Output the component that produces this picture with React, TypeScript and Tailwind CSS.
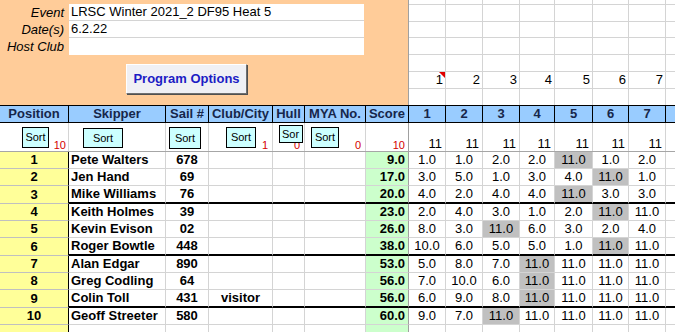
import React from "react";

const W = [
  "w-[69px]",
  "w-[97px]",
  "w-[43px]",
  "w-[64px]",
  "w-[32px]",
  "w-[61px]",
  "w-[43px]",
  "w-[37px]",
  "w-[37px]",
  "w-[37px]",
  "w-[35px]",
  "w-[38px]",
  "w-[36px]",
  "w-[37px]",
  "w-[40px]",
];
const RW = W.slice(7);

type Row = {
  name: string;
  sail: string;
  club: string;
  score: number;
  r: number[];
  d: number;
};

const rows: Row[] = [
  { name: "Pete Walters", sail: "678", club: "", score: 9, r: [1, 1, 2, 2, 11, 1, 2], d: 4 },
  { name: "Jen Hand", sail: "69", club: "", score: 17, r: [3, 5, 1, 3, 4, 11, 1], d: 5 },
  { name: "Mike Williams", sail: "76", club: "", score: 20, r: [4, 2, 4, 4, 11, 3, 3], d: 4 },
  { name: "Keith Holmes", sail: "39", club: "", score: 23, r: [2, 4, 3, 1, 2, 11, 11], d: 5 },
  { name: "Kevin Evison", sail: "02", club: "", score: 26, r: [8, 3, 11, 6, 3, 2, 4], d: 2 },
  { name: "Roger Bowtle", sail: "448", club: "", score: 38, r: [10, 6, 5, 5, 1, 11, 11], d: 5 },
  { name: "Alan Edgar", sail: "890", club: "", score: 53, r: [5, 8, 7, 11, 11, 11, 11], d: 3 },
  { name: "Greg Codling", sail: "64", club: "", score: 56, r: [7, 10, 6, 11, 11, 11, 11], d: 3 },
  { name: "Colin Toll", sail: "431", club: "visitor", score: 56, r: [6, 9, 8, 11, 11, 11, 11], d: 3 },
  { name: "Geoff Streeter", sail: "580", club: "", score: 60, r: [9, 7, 11, 11, 11, 11, 11], d: 2 },
];

const headers = ["Position", "Skipper", "Sail #", "Club/City", "Hull", "MYA No.", "Score", "1", "2", "3", "4", "5", "6", "7", ""];

function SortBtn({ cls, children }: { cls: string; children?: React.ReactNode }) {
  return (
    <div
      className={`${cls} shrink-0 border border-black bg-[#ccffff] text-[11px] text-black flex items-center overflow-hidden whitespace-nowrap`}
    >
      {children ?? "Sort"}
    </div>
  );
}

function Red({ cls, v }: { cls: string; v: string }) {
  return <span className={`absolute ${cls} bottom-0 text-[11px] leading-none text-[#d40000]`}>{v}</span>;
}

export default function App() {
  const topHeights = ["h-[5px]", "h-[17px]", "h-[16px]", "h-[17px]", "h-[17px]", "h-[17px]", "h-[16px]"];
  return (
    <div className="w-[675px] h-[332px] overflow-hidden bg-white text-black font-['Liberation_Sans',Arial,sans-serif]">
      {/* Top area */}
      <div className="flex h-[105px]">
        <div className="w-[409px] shrink-0 bg-[#ffcc99] border-r border-[#a0a0a0] pt-[4px]">
          {[
            ["Event", "LRSC Winter 2021_2 DF95 Heat 5"],
            ["Date(s)", "6.2.22"],
            ["Host Club", ""],
          ].map(([l, v], i) => (
            <div key={l} className="flex h-[17px]">
              <div className="w-[69px] shrink-0 pr-[5px] text-right italic text-[13px] leading-[17px]">{l}</div>
              <div
                className={`w-[295px] shrink-0 bg-white pl-[2px] text-[13px] leading-[16px] ${
                  i < 2 ? "border-b border-[#d4d4d4]" : ""
                }`}
              >
                {v}
              </div>
            </div>
          ))}
          <div className="ml-[126px] mt-[9px] w-[121px] h-[30px] bg-[#f0f0f4] border border-t-[#ffffff] border-l-[#ffffff] border-r-[#707070] border-b-[#707070] shadow-[1px_1px_0_#505050] flex items-center justify-center text-[13px] font-bold text-[#1c1cc4]">
            Program Options
          </div>
        </div>
        <div className="flex-1 flex flex-col">
          {topHeights.map((h, ri) => (
            <div key={ri} className={`flex shrink-0 ${h} ${ri < 6 ? "border-b border-[#d4d4d4]" : ""}`}>
              {RW.map((w, ci) => (
                <div
                  key={ci}
                  className={`${w} shrink-0 h-full border-r border-[#d4d4d4] relative flex items-center justify-end pr-[2px] text-[13px]`}
                >
                  {ri === 5 && ci < 7 ? ci + 1 : ""}
                  {ri === 5 && ci === 0 && (
                    <span className="absolute top-0 right-0 w-0 h-0 border-t-[6px] border-t-[#e00000] border-l-[6px] border-l-transparent" />
                  )}
                </div>
              ))}
            </div>
          ))}
        </div>
      </div>

      {/* Header row */}
      <div className="flex h-[18px] border-y border-black bg-[#99ccff]">
        {headers.map((h, i) => (
          <div
            key={i}
            className={`${W[i]} shrink-0 h-full ${
              i < 14 ? "border-r border-black" : ""
            } flex items-center justify-center text-[13px] font-bold text-[#16264a] whitespace-nowrap`}
          >
            {h}
          </div>
        ))}
      </div>

      {/* Sort row */}
      <div className="flex h-[29px] border-b border-[#a6a6a6]">
        <div className={`${W[0]} shrink-0 h-full border-r border-[#d4d4d4] relative pt-[4px] pl-[22px]`}>
          <SortBtn cls="w-[27px] h-[21px] justify-center" />
          <Red cls="right-[2px]" v="10" />
        </div>
        <div className={`${W[1]} shrink-0 h-full border-r border-[#d4d4d4] relative pt-[5px] pl-[14px]`}>
          <SortBtn cls="w-[40px] h-[20px] justify-center" />
        </div>
        <div className={`${W[2]} shrink-0 h-full border-r border-[#d4d4d4] relative pt-[4px] pl-[3px]`}>
          <SortBtn cls="w-[32px] h-[22px] justify-center" />
        </div>
        <div className={`${W[3]} shrink-0 h-full border-r border-[#d4d4d4] relative pt-[4px] pl-[17px]`}>
          <SortBtn cls="w-[30px] h-[21px] justify-center" />
          <Red cls="right-[4px]" v="1" />
        </div>
        <div className={`${W[4]} shrink-0 h-full border-r border-[#d4d4d4] relative pt-[2px] pl-[6px]`}>
          <Red cls="right-[4px]" v="0" />
          <SortBtn cls="relative w-[24px] h-[18px] pl-[2px]">Sor</SortBtn>
        </div>
        <div className={`${W[5]} shrink-0 h-full border-r border-[#d4d4d4] relative pt-[4px] pl-[6px]`}>
          <SortBtn cls="w-[28px] h-[21px] justify-center" />
          <Red cls="right-[4px]" v="0" />
        </div>
        <div className={`${W[6]} shrink-0 h-full border-r border-[#a0a0a0] relative`}>
          <Red cls="right-[3px]" v="10" />
        </div>
        {RW.map((w, ci) => (
          <div
            key={ci}
            className={`${w} shrink-0 h-full border-r border-[#d4d4d4] flex items-end justify-end pr-[3px] text-[13px] leading-[15px]`}
          >
            {ci < 7 ? "11" : ""}
          </div>
        ))}
      </div>

      {/* Data rows */}
      {rows.map((r, i) => {
        const thick = i === 2 || i === 5 || i === 8;
        const h = thick ? "h-[18px]" : "h-[17px]";
        const bb = thick ? "border-b-2 border-b-black" : "border-b border-b-[#d4d4d4]";
        return (
          <div key={i} className={`flex ${h}`}>
            <div
              className={`${W[0]} shrink-0 h-full bg-[#ffff99] border-r border-r-black border-b border-b-[#c0c0c0] flex items-center justify-center font-bold text-[13px]`}
            >
              {i + 1}
            </div>
            <div className={`${W[1]} shrink-0 h-full ${bb} border-r border-r-[#d4d4d4] flex items-center pl-[2px] font-bold text-[13px] whitespace-nowrap`}>
              {r.name}
            </div>
            <div className={`${W[2]} shrink-0 h-full ${bb} border-r border-r-[#d4d4d4] flex items-center justify-center font-bold text-[13px]`}>
              {r.sail}
            </div>
            <div className={`${W[3]} shrink-0 h-full ${bb} border-r border-r-[#d4d4d4] flex items-center justify-center font-bold text-[13px]`}>
              {r.club}
            </div>
            <div className={`${W[4]} shrink-0 h-full ${bb} border-r border-r-[#d4d4d4]`} />
            <div className={`${W[5]} shrink-0 h-full ${bb} border-r border-r-[#d4d4d4]`} />
            <div className={`${W[6]} shrink-0 h-full ${bb} bg-[#ccffcc] border-r border-r-[#a0a0a0] flex items-center justify-end pr-[3px] font-bold text-[13px]`}>
              {r.score.toFixed(1)}
            </div>
            {RW.map((w, ci) => (
              <div
                key={ci}
                className={`${w} shrink-0 h-full ${bb} border-r border-r-[#d4d4d4] flex items-center justify-center text-[13px] ${
                  ci === r.d ? "bg-[#c0c0c0]" : ""
                }`}
              >
                {ci < 7 ? r.r[ci].toFixed(1) : ""}
              </div>
            ))}
          </div>
        );
      })}

      {/* Empty trailing row */}
      <div className="flex h-[17px]">
        <div className={`${W[0]} shrink-0 h-full bg-[#ffff99] border-r border-r-black border-b border-b-[#c0c0c0]`} />
        {W.slice(1, 6).map((w, ci) => (
          <div key={ci} className={`${w} shrink-0 h-full border-r border-b border-[#d4d4d4]`} />
        ))}
        <div className={`${W[6]} shrink-0 h-full bg-[#ccffcc] border-r border-r-[#a0a0a0] border-b border-b-[#d4d4d4]`} />
        {RW.map((w, ci) => (
          <div key={ci} className={`${w} shrink-0 h-full border-r border-b border-[#d4d4d4]`} />
        ))}
      </div>
    </div>
  );
}
